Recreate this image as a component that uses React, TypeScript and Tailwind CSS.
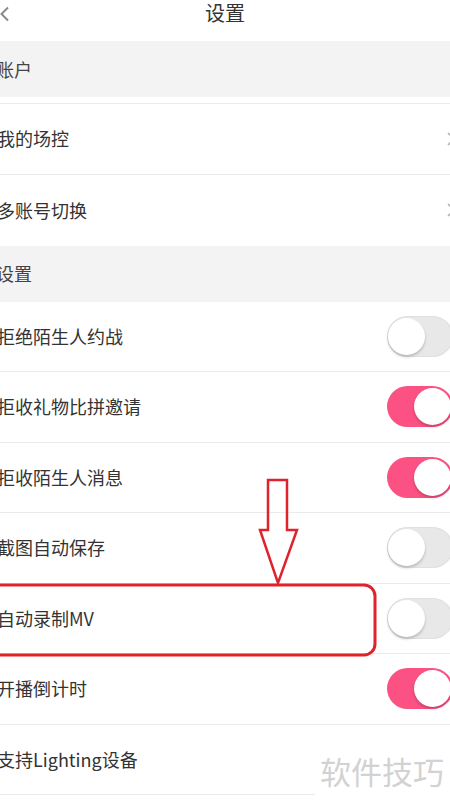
import { useState } from 'react'

type ToggleKey = 'stranger' | 'gift' | 'message' | 'screenshot' | 'mv' | 'countdown'

function Toggle({ on, onClick }: { on: boolean; onClick: () => void }) {
    return (
        <button
            onClick={onClick}
            className={`relative shrink-0 w-[66px] h-[41px] rounded-full -mr-[3px] ${on ? 'bg-[#fb5183]' : 'bg-[#e8e8e8] shadow-[inset_0_0_0_1px_#e0e0e0]'
                }`}
        >
            <span
                className={`absolute top-[2px] w-[37px] h-[37px] rounded-full bg-white shadow-[0_2px_3px_rgba(0,0,0,0.2)] ${on ? 'left-[27px]' : 'left-[1px]'
                    }`}
            />
        </button>
    )
}

function Chevron() {
    return (
        <svg width="10" height="16" viewBox="0 0 10 16" className="-mr-[6px]">
            <path d="M2 2 L8 8 L2 14" fill="none" stroke="#b5b5b5" strokeWidth="1.6" />
        </svg>
    )
}

function SectionHeader({ title }: { title: string }) {
    return (
        <div className="h-[56px] bg-[#f3f3f3] flex items-center">
            <span className="-ml-[4px] text-[18px] text-[#444]">{title}</span>
        </div>
    )
}

function Row({ label, children }: { label: string; children?: React.ReactNode }) {
    return (
        <div className="h-[70.5px] border-b border-[#ebebeb] flex items-center justify-between">
            <span className="-ml-[3px] text-[18px] text-[#333]">{label}</span>
            {children}
        </div>
    )
}

export default function App() {
    const [toggles, setToggles] = useState<Record<ToggleKey, boolean>>({
        stranger: false,
        gift: true,
        message: true,
        screenshot: false,
        mv: false,
        countdown: true
    })

    const flip = (key: ToggleKey) => {
        setToggles(prev => ({ ...prev, [key]: !prev[key] }))
    }

    const rows: { key: ToggleKey; label: string }[] = [
        { key: 'stranger', label: '拒绝陌生人约战' },
        { key: 'gift', label: '拒收礼物比拼邀请' },
        { key: 'message', label: '拒收陌生人消息' },
        { key: 'screenshot', label: '截图自动保存' },
        { key: 'mv', label: '自动录制MV' },
        { key: 'countdown', label: '开播倒计时' }
    ]

    return (
        <div className="relative w-[450px] h-[801px] overflow-hidden bg-white font-['Noto_Sans_CJK_SC','Noto_Sans',sans-serif]">
            {/* title bar */}
            <div className="relative h-[41px] flex justify-center">
                <svg width="10" height="16" viewBox="0 0 10 16" className="absolute left-0 top-[6px]">
                    <path d="M8 1.5 L1.5 8 L8 14.5" fill="none" stroke="#8a8a8a" strokeWidth="2" />
                </svg>
                <span className="text-[20px] leading-[26px] text-[#333]">设置</span>
            </div>

            <SectionHeader title="账户" />
            <div className="h-[7px] border-b border-[#ebebeb]" />
            <Row label="我的场控">
                <Chevron />
            </Row>
            <div className="h-[71px] flex items-center justify-between">
                <span className="-ml-[3px] text-[18px] text-[#333]">多账号切换</span>
                <Chevron />
            </div>

            <SectionHeader title="设置" />
            {rows.map(r => (
                <Row key={r.key} label={r.label}>
                    <Toggle on={toggles[r.key]} onClick={() => flip(r.key)} />
                </Row>
            ))}
            <Row label="支持Lighting设备" />

            {/* watermark */}
            <div className="absolute left-[315px] top-[740px] w-[135px] h-[61px] bg-white flex items-center pl-[5px]">
                <span className="text-[31px] leading-none text-[#d2d2d2] tracking-[0px]">软件技巧</span>
            </div>

            {/* red annotation */}
            <svg className="absolute inset-0 pointer-events-none" width="450" height="801" viewBox="0 0 450 801">
                <polygon
                    points="268,480 287,480 287,530 297,530 278,583 260,530 268,530"
                    fill="none"
                    stroke="#e0222c"
                    strokeWidth="2.5"
                    strokeLinejoin="miter"
                />
                <rect x="-10" y="585" width="385" height="70" rx="11" fill="none" stroke="#e0222c" strokeWidth="3" />
            </svg>
        </div>
    )
}
